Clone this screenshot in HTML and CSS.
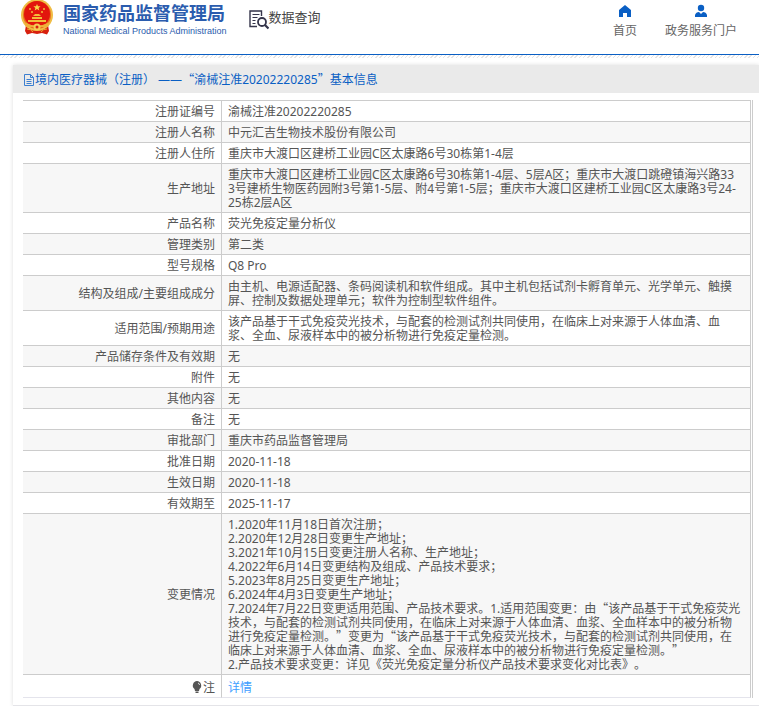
FILE: index.html
```html
<!DOCTYPE html>
<html lang="zh-CN">
<head>
  <meta charset="UTF-8">
  <meta name="viewport" content="width=device-width, initial-scale=1.0">
  <title>国家药品监督管理局 数据查询</title>
  <link rel="stylesheet" href="styles.css">
</head>
<body>
  <header class="header">
    <a class="logo" href="#">
      <svg class="emblem" viewBox="0 0 32 36" aria-hidden="true">
        <path d="M5 25h22l1 6-2 3.500-5-1.500-5 1-5-1-5 1.500L4 31z" fill="#d8200f"/>
        <circle cx="16" cy="15" r="16" fill="#f0bd45"/>
        <circle cx="16" cy="15" r="14" fill="#e8701f"/>
        <circle cx="16" cy="14" r="13" fill="#e2150d"/>
        <path d="M16 4l1 2.300h2.600l-2 1.600.7 2.500-2.300-1.500-2.300 1.500.7-2.500-2-1.600H15z" fill="#f9d648"/>
        <g fill="#f3bd3a">
          <circle cx="9" cy="9" r="1"/><circle cx="23" cy="9" r="1"/>
          <circle cx="11" cy="12" r="1"/><circle cx="21" cy="12" r="1"/>
          <path d="M12 16l2-2h4l2 2zM11 17h10v2H11zM7 20h18v2H7z"/>
        </g>
        <path d="M3 22q13 7 26 0l-2 5H5z" fill="#eeb03a"/>
        <circle cx="16" cy="27" r="3.500" fill="#f5cd55"/>
        <circle cx="16" cy="27" r="1.500" fill="#d8200f"/>
        <path d="M6 29q4 0 6 3M26 29q-4 0-6 3" fill="none" stroke="#f0a52e"/>
      </svg>
      <span class="logo-text">
        <span class="logo-cn">国家药品监督管理局</span>
        <span class="logo-en">National Medical Products Administration</span>
      </span>
    </a>
    <a class="query" href="#">
      <svg class="query-icon" viewBox="0 0 20 20" aria-hidden="true">
        <g fill="none" stroke="#35354a">
          <path d="M8 16.500H1V1h11.500v5" stroke-width="1.400"/>
          <path d="M3.500 4.500h7M3.500 7.500h5M3.500 10.500h3M3.500 13.500h3" stroke-width="1.200"/>
          <circle cx="13" cy="12" r="4" stroke-width="1.800"/>
          <path d="M16 15l3.500 3.500" stroke-width="2.200"/>
        </g>
      </svg>
      <span>数据查询</span>
    </a>
    <nav class="nav">
      <a href="#">
        <svg class="nav-icon" viewBox="0 0 14 14" aria-hidden="true"><path d="M7 1l6 5v7H9V9H5v4H1V6z" fill="#0a5fc4"/></svg>
        首页
      </a>
      <a href="#">
        <svg class="nav-icon" viewBox="0 0 14 14" aria-hidden="true"><circle cx="7" cy="4" r="3.200" fill="#0a5fc4"/><path d="M1 13V11q1-3 4-3l2 2 2-2q3 0 4 3v2z" fill="#0a5fc4"/></svg>
        政务服务门户
      </a>
    </nav>
  </header>
  <div class="hatch"></div>

  <main class="panel">
    <h1 class="panel-title">
      <svg class="doc-icon" viewBox="0 0 12 12" aria-hidden="true"><path d="M1.500.5h6l3 3v8h-9zM7.500.5v3h3M3.500 5.500h5M3.500 7.500h5M3.500 9.500h5" fill="none" stroke="#3c7fd0"/></svg>
      <span>境内医疗器械（注册） ——<span class="quote">“</span>渝械注准20202220285<span class="quote">”</span>基本信息</span>
    </h1>
    <table class="info">
      <tbody>
        <tr><th scope="row">注册证编号</th><td>渝械注准20202220285</td></tr>
        <tr><th scope="row">注册人名称</th><td>中元汇吉生物技术股份有限公司</td></tr>
        <tr><th scope="row">注册人住所</th><td>重庆市大渡口区建桥工业园C区太康路6号30栋第1-4层</td></tr>
        <tr><th scope="row">生产地址</th><td>重庆市大渡口区建桥工业园C区太康路6号30栋第1-4层、5层A区；重庆市大渡口跳磴镇海兴路33<br>3号建桥生物医药园附3号第1-5层、附4号第1-5层；重庆市大渡口区建桥工业园C区太康路3号24-<br>25栋2层A区</td></tr>
        <tr><th scope="row">产品名称</th><td>荧光免疫定量分析仪</td></tr>
        <tr><th scope="row">管理类别</th><td>第二类</td></tr>
        <tr><th scope="row">型号规格</th><td>Q8 Pro</td></tr>
        <tr><th scope="row">结构及组成/主要组成成分</th><td>由主机、电源适配器、条码阅读机和软件组成。其中主机包括试剂卡孵育单元、光学单元、触摸屏、控制及数据处理单元；软件为控制型软件组件。</td></tr>
        <tr><th scope="row">适用范围/预期用途</th><td>该产品基于干式免疫荧光技术，与配套的检测试剂共同使用，在临床上对来源于人体血清、血浆、全血、尿液样本中的被分析物进行免疫定量检测。</td></tr>
        <tr><th scope="row">产品储存条件及有效期</th><td>无</td></tr>
        <tr><th scope="row">附件</th><td>无</td></tr>
        <tr><th scope="row">其他内容</th><td>无</td></tr>
        <tr><th scope="row">备注</th><td>无</td></tr>
        <tr><th scope="row">审批部门</th><td>重庆市药品监督管理局</td></tr>
        <tr><th scope="row">批准日期</th><td>2020-11-18</td></tr>
        <tr><th scope="row">生效日期</th><td>2020-11-18</td></tr>
        <tr><th scope="row">有效期至</th><td>2025-11-17</td></tr>
        <tr>
          <th scope="row">变更情况</th>
          <td>
            1.2020年11月18日首次注册；<br>
            2.2020年12月28日变更生产地址；<br>
            3.2021年10月15日变更注册人名称、生产地址；<br>
            4.2022年6月14日变更结构及组成、产品技术要求；<br>
            5.2023年8月25日变更生产地址；<br>
            6.2024年4月3日变更生产地址；<br>
            7.2024年7月22日变更适用范围、产品技术要求。1.适用范围变更：由<span class="quote">“</span>该产品基于干式免疫荧光技术，与配套的检测试剂共同使用，在临床上对来源于人体血清、血浆、全血样本中的被分析物进行免疫定量检测。<span class="quote">”</span>变更为<span class="quote">“</span>该产品基于干式免疫荧光技术，与配套的检测试剂共同使用，在临床上对来源于人体血清、血浆、全血、尿液样本中的被分析物进行免疫定量检测。<span class="quote">”</span><br>
            2.产品技术要求变更：详见《荧光免疫定量分析仪产品技术要求变化对比表》。
          </td>
        </tr>
        <tr class="note">
          <th scope="row"><svg class="bulb" viewBox="0 0 10 12" aria-hidden="true"><path d="M5 0a4.500 4.500 0 0 1 2.500 8L7 10H3l-.5-2A4.500 4.500 0 0 1 5 0zM3.500 10.500h3V12h-3z" fill="#555"/><path d="M6 2q1.500.5 1.500 2" fill="none" stroke="#ddd"/></svg>注</th>
          <td><a href="#">详情</a></td>
        </tr>
      </tbody>
    </table>
  </main>
</body>
</html>
```

FILE: styles.css
```css
* {
  box-sizing: border-box;
}

body {
  margin: 0;
  background: #fff;
  color: #555;
  font-family: "Noto Sans", "Noto Sans CJK SC", sans-serif;
  font-size: 12px;
  line-height: 14px;
  text-spacing-trim: space-all;
}

a {
  color: inherit;
  text-decoration: none;
}

/* header */
.header {
  display: flex;
  align-items: flex-start;
  height: 55px;
  padding: 0 22px 0 21px;
  border-bottom: 1px solid #0a5fc4;
}

.hatch {
  height: 3px;
  background: repeating-linear-gradient(135deg, #e6e4e4 0 1px, #fff 1px 3px);
}

.logo {
  display: flex;
  gap: 10px;
  color: #2b5cae;
}

.emblem {
  width: 32px;
  height: 36px;
}

.logo-text {
  display: flex;
  flex-direction: column;
  white-space: nowrap;
}

.logo-cn {
  font-family: "Noto Sans CJK SC", sans-serif;
  font-size: 18px;
  font-weight: bold;
  line-height: 25px;
}

.logo-en {
  font-family: "Liberation Sans", sans-serif;
  font-size: 9px;
  line-height: 12px;
}

.query {
  display: flex;
  align-items: flex-start;
  margin: 8px 0 0 22px;
  color: #444;
  font-size: 13px;
  line-height: 18px;
}

.query-icon {
  width: 20px;
  height: 20px;
  margin-top: 2px;
}

.nav {
  display: flex;
  gap: 28px;
  margin-left: auto;
  padding-top: 4px;
  color: #666;
}

.nav a {
  display: flex;
  flex-direction: column;
  align-items: center;
  gap: 6px;
}

.nav-icon {
  width: 14px;
  height: 14px;
}

/* detail panel */
.panel {
  margin: 7px 0 0 13px;
  padding-bottom: 7px;
  border-bottom: 1px solid #e4e4e8;
  box-shadow: 0 0 4px #ddd;
}

.panel-title {
  display: flex;
  align-items: center;
  height: 28px;
  margin: 0 0 7px;
  padding: 2px 0 0 10px;
  background: #eaeaea;
  color: #0a5fc4;
  font-size: 12px;
  font-weight: normal;
}

.doc-icon {
  width: 12px;
  height: 12px;
}

/* full-width quotes; the low line height keeps them from stretching the line */
.quote {
  font-family: "Noto Sans CJK SC", sans-serif;
  line-height: 10px;
}

.info {
  width: calc(100% - 16px);
  margin-left: 10px;
  border-collapse: separate;
  border-spacing: 0;
  border-right: 1px solid #ccc;
  padding-right: 1px;
  table-layout: fixed;
}

.info th,
.info td {
  border-top: 1px solid #ccc;
  border-right: 1px solid #ccc;
  padding: 4px 6px 2px;
  font-weight: normal;
  word-break: break-all;
}

.info th {
  width: 199px;
  text-align: right;
}

.info td {
  padding-right: 7px;
  text-align: left;
}

.info tr:nth-child(even) {
  background: #f7f7f7;
}

.info .note {
  background: #fff;
}

.info .note th,
.info .note td {
  padding-top: 6px;
  border-bottom: 1px solid #e4e4ec;
}

.note a {
  color: #409eff;
}

.bulb {
  width: 10px;
  height: 12px;
  margin-right: 1px;
  vertical-align: -1px;
}
```
